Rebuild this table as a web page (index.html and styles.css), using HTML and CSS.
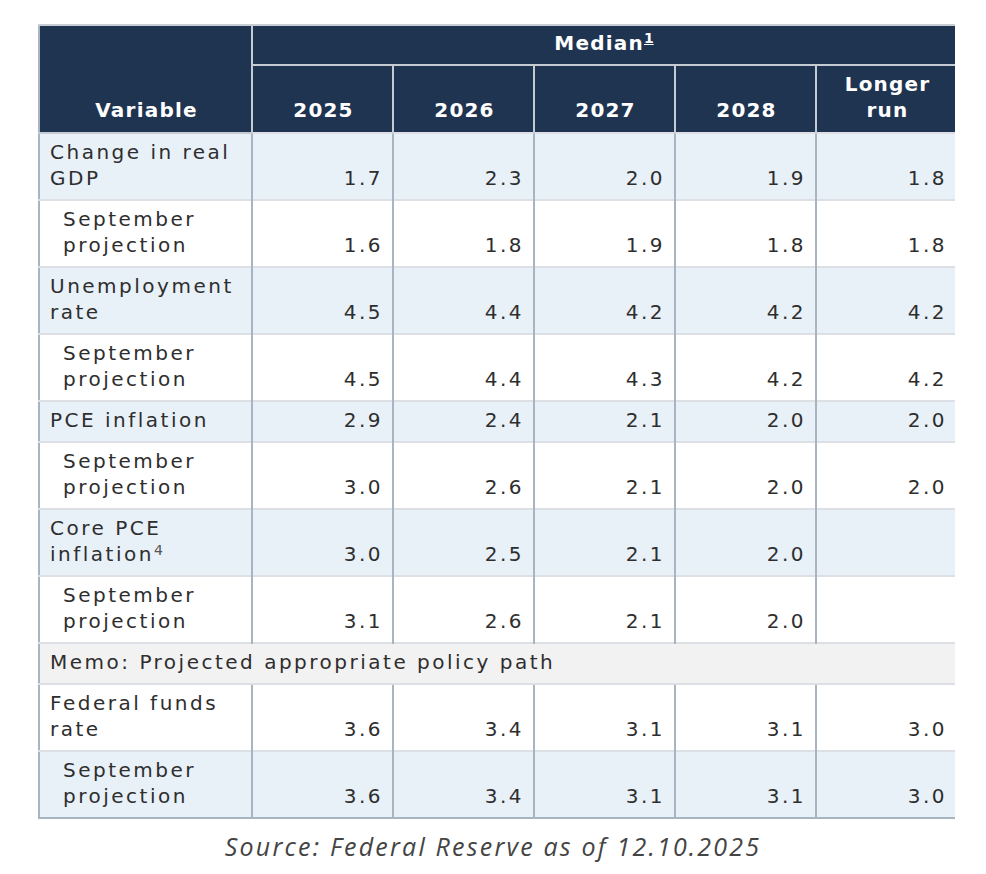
FILE: index.html
```html
<!DOCTYPE html>
<html lang="en">
<head>
<meta charset="utf-8">
<title>Economic projections</title>
<link rel="stylesheet" href="styles.css">
</head>
<body>
<main class="page">
  <div class="table-wrap">
    <table class="proj">
      <colgroup>
        <col class="c-var">
        <col class="c-num">
        <col class="c-num">
        <col class="c-num">
        <col class="c-num">
        <col class="c-last">
      </colgroup>
      <thead>
        <tr class="h1">
          <th rowspan="2" class="h-var">Variable</th>
          <th colspan="5" class="h-median">Median<sup class="fn-link">1</sup></th>
        </tr>
        <tr class="h2">
          <th>2025</th>
          <th>2026</th>
          <th>2027</th>
          <th>2028</th>
          <th class="h-last">Longer<br>run</th>
        </tr>
      </thead>
      <tbody>
        <tr class="shade">
          <td class="lbl">Change in real GDP</td>
          <td>1.7</td><td>2.3</td><td>2.0</td><td>1.9</td><td>1.8</td>
        </tr>
        <tr>
          <td class="lbl sub">September projection</td>
          <td>1.6</td><td>1.8</td><td>1.9</td><td>1.8</td><td>1.8</td>
        </tr>
        <tr class="shade">
          <td class="lbl">Unemployment rate</td>
          <td>4.5</td><td>4.4</td><td>4.2</td><td>4.2</td><td>4.2</td>
        </tr>
        <tr>
          <td class="lbl sub">September projection</td>
          <td>4.5</td><td>4.4</td><td>4.3</td><td>4.2</td><td>4.2</td>
        </tr>
        <tr class="shade">
          <td class="lbl">PCE inflation</td>
          <td>2.9</td><td>2.4</td><td>2.1</td><td>2.0</td><td>2.0</td>
        </tr>
        <tr>
          <td class="lbl sub">September projection</td>
          <td>3.0</td><td>2.6</td><td>2.1</td><td>2.0</td><td>2.0</td>
        </tr>
        <tr class="shade">
          <td class="lbl">Core PCE inflation<sup class="fn">4</sup></td>
          <td>3.0</td><td>2.5</td><td>2.1</td><td>2.0</td><td></td>
        </tr>
        <tr>
          <td class="lbl sub">September projection</td>
          <td>3.1</td><td>2.6</td><td>2.1</td><td>2.0</td><td></td>
        </tr>
        <tr class="memo">
          <td colspan="6" class="lbl">Memo: Projected appropriate policy path</td>
        </tr>
        <tr>
          <td class="lbl">Federal funds rate</td>
          <td>3.6</td><td>3.4</td><td>3.1</td><td>3.1</td><td>3.0</td>
        </tr>
        <tr class="shade">
          <td class="lbl sub">September projection</td>
          <td>3.6</td><td>3.4</td><td>3.1</td><td>3.1</td><td>3.0</td>
        </tr>
      </tbody>
    </table>
  </div>
  <p class="source">Source: Federal Reserve as of 12.10.2025</p>
</main>
</body>
</html>
```

FILE: styles.css
```css
html, body {
  margin: 0;
  padding: 0;
  background: #ffffff;
}

.page {
  width: 986px;
  height: 874px;
  box-sizing: border-box;
  padding-top: 24px;
}

.table-wrap {
  margin-left: 38px;
  width: 917px;
  overflow: hidden;
}

.proj {
  width: 917px;
  table-layout: fixed;
  border-collapse: collapse;
  font-family: "DejaVu Sans", "Liberation Sans", sans-serif;
  font-size: 20px;
  line-height: 26px;
  letter-spacing: 2.5px;
  color: #2e2e2e;
  border-left: 2px solid #a9b4c2;
  border-top: 2px solid #c9ced5;
  border-bottom: 2px solid #a9b4c2;
}

.c-var { width: 213px; }
.c-num { width: 141px; }
.c-last { width: 140px; }

.proj th {
  background: #1f3451;
  color: #ffffff;
  font-weight: bold;
  letter-spacing: 1.2px;
  text-align: center;
  vertical-align: bottom;
  border: 2px solid #c5cbd3;
  border-top: none;
  padding: 5px 4px 9px 6px;
}

.proj th.h-last,
.proj th.h-median {
  border-right: none;
}

.proj th.h-var {
  border-left: none;
}

.h1 th {
  height: 26px;
}

.h1 .h-median {
  vertical-align: top;
  padding-top: 4px;
  padding-bottom: 8px;
}

.h2 th {
  height: 52px;
  border-bottom: none;
}

.fn-link {
  font-size: 14px;
  line-height: 0;
  letter-spacing: 0;
  text-decoration: underline;
  vertical-align: 7px;
  padding-right: 3px;
}

.proj td {
  text-align: right;
  vertical-align: bottom;
  padding: 5px 9px 8px 8px;
  border-left: 2px solid #a9b4c2;
  border-top: 2px solid #dcdfe3;
  background: #ffffff;
}

.proj td:first-child {
  border-left: none;
}

.proj tr.shade td {
  background: #e8f0f8;
}

.proj tr.memo td {
  background: #f2f2f2;
}

.proj td.lbl {
  text-align: left;
  vertical-align: top;
  padding-left: 10px;
  padding-right: 2px;
}

.proj td.lbl.sub {
  padding-left: 23px;
}

.fn {
  font-size: 14px;
  line-height: 14px;
  letter-spacing: 0;
  vertical-align: 6px;
  color: #555555;
}

.source {
  margin: 10px 0 0 0;
  text-align: center;
  font-family: "Open Sans", "Noto Sans", sans-serif;
  font-style: italic;
  font-size: 25px;
  line-height: 34px;
  letter-spacing: 2.2px;
  color: #444444;
}
```
